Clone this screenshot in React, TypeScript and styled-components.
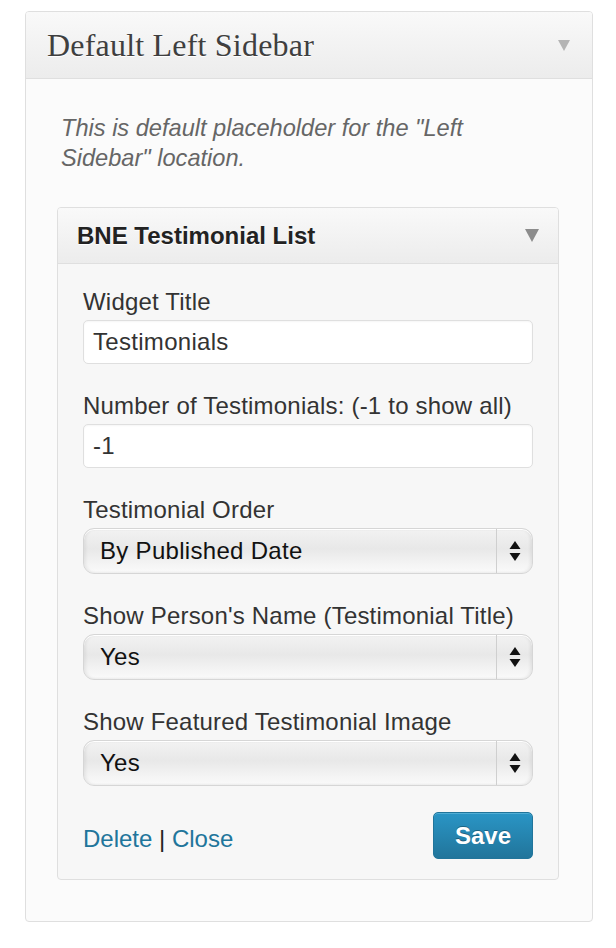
import React from 'react';
import styled, { createGlobalStyle } from 'styled-components';

const GlobalStyle = createGlobalStyle`
  html, body {
    margin: 0;
    padding: 0;
    background: #ffffff;
  }
  body {
    font-family: 'Liberation Sans', Arial, sans-serif;
    color: #333;
  }
`;

// outer sidebar box
const Page = styled.div`
  width: 616px;
  height: 948px;
  padding: 11px 23px 0 25px;
  box-sizing: border-box;
`;

const Sidebar = styled.div`
  border: 1px solid #dfdfdf;
  border-radius: 4px;
  background: #fbfbfb;
  box-shadow: 0 1px 0 #fff inset;
  overflow: hidden;
`;

const SidebarHeader = styled.div`
  height: 66px;
  display: flex;
  align-items: center;
  justify-content: space-between;
  padding: 0 22px 0 21px;
  background: linear-gradient(to bottom, #f9f9f9, #ececec);
  border-bottom: 1px solid #dfdfdf;
`;

const SidebarTitle = styled.h2`
  margin: 0;
  font-family: 'Liberation Serif', Georgia, serif;
  font-weight: 400;
  font-size: 32px;
  letter-spacing: 0.2px;
  color: #3f3f3f;
  text-shadow: 0 1px 0 #fff;
`;

const Arrow = styled.span<{ size: number }>`
  width: 0;
  height: 0;
  border-left: ${(p) => p.size * 0.55}px solid transparent;
  border-right: ${(p) => p.size * 0.55}px solid transparent;
  border-top: ${(p) => p.size}px solid ${(p) => (p.size > 12 ? '#8c8c8c' : '#b4b4b4')};
`;

const SidebarBody = styled.div`
  padding: 34px 33px 41px 31px;
`;

const Description = styled.p`
  margin: 0 0 34px 4px;
  font-style: italic;
  font-size: 23.6px;
  line-height: 30px;
  color: #666;
`;

// widget box
const Widget = styled.div`
  border: 1px solid #dfdfdf;
  border-radius: 4px;
  background: #f7f7f7;
  overflow: hidden;
`;

const WidgetHeader = styled.div`
  height: 55px;
  display: flex;
  align-items: center;
  justify-content: space-between;
  padding: 0 19px 0 19px;
  background: linear-gradient(to bottom, #f9f9f9, #ececec);
  border-bottom: 1px solid #dfdfdf;
`;

const WidgetTitle = styled.h3`
  margin: 0;
  font-size: 24px;
  font-weight: 700;
  color: #222;
  text-shadow: 0 1px 0 #fff;
`;

const WidgetBody = styled.div`
  padding: 25px 25px 20px 25px;
  display: flex;
  flex-direction: column;
  gap: 29px;
`;

const Field = styled.div`
  display: flex;
  flex-direction: column;
`;

const Label = styled.label`
  font-size: 24px;
  letter-spacing: 0.2px;
  line-height: 26px;
  color: #333;
  margin-bottom: 5px;
`;

const TextInput = styled.div`
  height: 44px;
  box-sizing: border-box;
  border: 1px solid #dfdfdf;
  border-radius: 5px;
  background: #fff;
  display: flex;
  align-items: center;
  padding: 0 9px;
  font-size: 24px;
  letter-spacing: 0.3px;
  color: #333;
  box-shadow: 0 1px 2px rgba(0, 0, 0, 0.04) inset;
`;

const Select = styled.div`
  height: 46px;
  box-sizing: border-box;
  border: 1px solid #d6d6d6;
  border-radius: 11px;
  background: linear-gradient(to bottom, #f2f2f2 0%, #e8e8e8 45%, #f4f4f4 80%, #fafafa 100%);
  box-shadow: 0 1px 0 #fff inset, 2px 0 3px rgba(0, 0, 0, 0.06) inset, -2px 0 3px rgba(0, 0, 0, 0.06) inset;
  display: flex;
  align-items: stretch;
`;

const SelectValue = styled.div`
  flex: 1;
  display: flex;
  align-items: center;
  padding-left: 16px;
  font-size: 24px;
  letter-spacing: 0.3px;
  color: #111;
`;

const SelectToggle = styled.div`
  width: 35px;
  border-left: 1px solid #cfcfcf;
  display: flex;
  align-items: center;
  justify-content: center;
`;

const Footer = styled.div`
  display: flex;
  align-items: center;
  justify-content: space-between;
  margin-top: -3px;
`;

const Links = styled.div`
  font-size: 24px;
  color: #222;
  padding-top: 6px;
`;

const Link = styled.a`
  color: #21759b;
  text-decoration: none;
`;

const SaveButton = styled.button`
  width: 100px;
  height: 47px;
  border: 1px solid #21759b;
  border-radius: 5px;
  background: linear-gradient(to bottom, #2a95c5, #21759b);
  box-shadow: 0 1px 0 rgba(120, 200, 230, 0.5) inset;
  color: #fff;
  font-family: 'Liberation Sans', Arial, sans-serif;
  font-size: 24px;
  font-weight: 700;
  text-shadow: 0 -1px 0 rgba(0, 0, 0, 0.3);
  cursor: pointer;
`;

const UpDown = () => (
  <svg width="12" height="22" viewBox="0 0 12 22">
    <path d="M6 1 L11.5 9 H0.5 Z" fill="#111" />
    <path d="M6 21 L11.5 13 H0.5 Z" fill="#111" />
  </svg>
);

const fields: { label: string; value: string; kind: 'input' | 'select' }[] = [
  { label: 'Widget Title', value: 'Testimonials', kind: 'input' },
  { label: 'Number of Testimonials: (-1 to show all)', value: '-1', kind: 'input' },
  { label: 'Testimonial Order', value: 'By Published Date', kind: 'select' },
  { label: "Show Person's Name (Testimonial Title)", value: 'Yes', kind: 'select' },
  { label: 'Show Featured Testimonial Image', value: 'Yes', kind: 'select' },
];

export default function App() {
  return (
    <>
      <GlobalStyle />
      <Page>
        <Sidebar>
          <SidebarHeader>
            <SidebarTitle>Default Left Sidebar</SidebarTitle>
            <Arrow size={11} />
          </SidebarHeader>
          <SidebarBody>
            <Description>
              This is default placeholder for the "Left Sidebar" location.
            </Description>
            <Widget>
              <WidgetHeader>
                <WidgetTitle>BNE Testimonial List</WidgetTitle>
                <Arrow size={13} />
              </WidgetHeader>
              <WidgetBody>
                {fields.map((f) => (
                  <Field key={f.label}>
                    <Label>{f.label}</Label>
                    {f.kind === 'input' ? (
                      <TextInput>{f.value}</TextInput>
                    ) : (
                      <Select>
                        <SelectValue>{f.value}</SelectValue>
                        <SelectToggle>
                          <UpDown />
                        </SelectToggle>
                      </Select>
                    )}
                  </Field>
                ))}
                <Footer>
                  <Links>
                    <Link href="#">Delete</Link> | <Link href="#">Close</Link>
                  </Links>
                  <SaveButton>Save</SaveButton>
                </Footer>
              </WidgetBody>
            </Widget>
          </SidebarBody>
        </Sidebar>
      </Page>
    </>
  );
}
